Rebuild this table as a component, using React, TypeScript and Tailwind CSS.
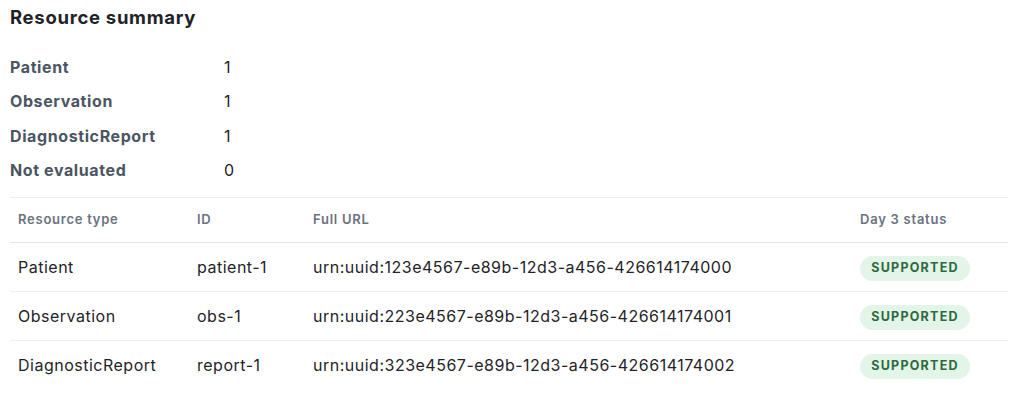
const summary = [
  { label: "Patient", value: 1 },
  { label: "Observation", value: 1 },
  { label: "DiagnosticReport", value: 1 },
  { label: "Not evaluated", value: 0 },
];

const resources = [
  { type: "Patient", id: "patient-1", url: "urn:uuid:123e4567-e89b-12d3-a456-426614174000" },
  { type: "Observation", id: "obs-1", url: "urn:uuid:223e4567-e89b-12d3-a456-426614174001" },
  { type: "DiagnosticReport", id: "report-1", url: "urn:uuid:323e4567-e89b-12d3-a456-426614174002" },
];

export default function App() {
  return (
    <div className="min-h-screen bg-white pl-[10px] pr-4 pt-[3px] text-[#1f2328] font-['Inter',sans-serif]">
      <h2 className="text-[18.5px] leading-[28px] font-bold tracking-[0.7px] text-[#1f2328]">Resource summary</h2>

      <dl className="mt-[24px] grid grid-cols-[214px_1fr] gap-y-[10.4px]">
        {summary.map((row) => (
          <div key={row.label} className="contents">
            <dt className="text-[16px] leading-6 font-bold tracking-[0.6px] text-[#4b5563]">{row.label}</dt>
            <dd className="text-[16px] leading-6 text-[#1f2328]">{row.value}</dd>
          </div>
        ))}
      </dl>

      <table className="mt-[15px] w-[998px] border-collapse border-t border-[#eceef1] text-left">
        <thead>
          <tr className="border-b border-[#e5e7eb] text-[13px] font-semibold tracking-[0.75px] text-[#6b7280]">
            <th className="w-[179px] h-[45px] px-2 font-semibold">Resource type</th>
            <th className="w-[116px] px-2 font-semibold">ID</th>
            <th className="px-2 font-semibold">Full URL</th>
            <th className="w-[156px] px-2 font-semibold">Day 3 status</th>
          </tr>
        </thead>
        <tbody className="text-[16px] tracking-[0.5px]">
          {resources.map((r, i) => (
            <tr key={r.id} className={i < resources.length - 1 ? "border-b border-[#eceef1]" : ""}>
              <td className="h-[49px] px-2">{r.type}</td>
              <td className="px-2">{r.id}</td>
              <td className="px-2">{r.url}</td>
              <td className="px-2">
                <span className="inline-flex h-[25px] w-[110px] items-center justify-center rounded-full bg-[#e3f4e8] text-[12.5px] font-bold tracking-[1.25px] text-[#2d6a3e]">
                  SUPPORTED
                </span>
              </td>
            </tr>
          ))}
        </tbody>
      </table>
    </div>
  );
}
